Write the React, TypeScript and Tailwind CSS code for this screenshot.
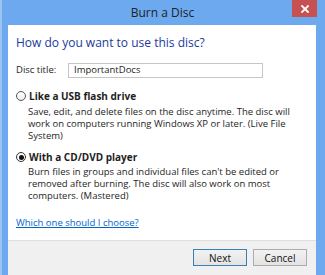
export default function App() {
  const font = { fontFamily: '"Open Sans", "Noto Sans", sans-serif' };

  return (
    <div className="w-[325px] h-[275px] bg-[#6ca9ef] flex flex-col pl-[6px] pr-[9px] border-l-2 border-[#9cc4f2] overflow-hidden" style={font}>
      {/* title bar */}
      <div className="relative h-[25px] shrink-0 flex items-center justify-center -ml-[8px] -mr-[9px]">
        <span className="text-[12px] text-[#222] leading-none pt-[1px]">Burn a Disc</span>
        <div className="absolute right-[8px] top-0 w-[25px] h-[17px] bg-[#c75050] flex items-center justify-center">
          <svg width="8" height="8" viewBox="0 0 8 8">
            <path d="M1 1 L7 7 M7 1 L1 7" stroke="#fff" strokeWidth="1.8" strokeLinecap="square" />
          </svg>
        </div>
      </div>

      {/* body */}
      <div className="bg-white px-[8px] pt-[10px] pb-[11px] text-[#1e1e1e]">
        <h1 className="text-[12px] leading-[16px] text-[#1c3a9a]">How do you want to use this disc?</h1>

        <div className="flex items-center mt-[12px] h-[15px]">
          <span className="text-[9.5px] w-[52px]">Disc title:</span>
          <div className="w-[195px] h-[15px] border border-[#c5c5c5] flex items-center px-[5px] text-[9.5px]">
            ImportantDocs
          </div>
        </div>

        <div className="mt-[12px]">
          <div className="flex items-center h-[12px] gap-[3px]">
            <span className="w-[10px] h-[10px] rounded-full border border-[#555] bg-gradient-to-b from-white to-[#eee]" />
            <span className="text-[10px] font-bold">Like a USB flash drive</span>
          </div>
          <p className="ml-[12px] mt-[4px] text-[9.5px] leading-[12px]">
            Save, edit, and delete files on the disc anytime. The disc will work on computers running Windows XP or later. (Live File System)
          </p>
        </div>

        <div className="mt-[9px]">
          <div className="flex items-center h-[12px] gap-[3px]">
            <span className="w-[10px] h-[10px] rounded-full border border-[#333] bg-white flex items-center justify-center">
              <span className="w-[5px] h-[5px] rounded-full bg-[#111]" />
            </span>
            <span className="text-[10px] font-bold">With a CD/DVD player</span>
          </div>
          <p className="ml-[12px] mt-[3px] text-[9.5px] leading-[12px]">
            Burn files in groups and individual files can't be edited or removed after burning. The disc will also work on most computers. (Mastered)
          </p>
        </div>

        <div className="mt-[15px] text-[9.5px] leading-[12px]">
          <span className="text-[#0066cc] underline">Which one should I choose?</span>
        </div>
      </div>

      {/* footer */}
      <div className="flex-1 bg-[#f0f0f0] border-t border-[#dfdfdf] flex justify-end items-start pt-[8px] pr-[9px] gap-[6px]">
        <button className="w-[54px] h-[17px] border border-[#3c7fb1] bg-gradient-to-b from-[#f2f2f2] to-[#e3e3e3] text-[10px] leading-none text-[#111]">
          Next
        </button>
        <button className="w-[54px] h-[17px] border border-[#acacac] bg-gradient-to-b from-[#f2f2f2] to-[#e3e3e3] text-[10px] leading-none text-[#111]">
          Cancel
        </button>
      </div>
    </div>
  );
}
